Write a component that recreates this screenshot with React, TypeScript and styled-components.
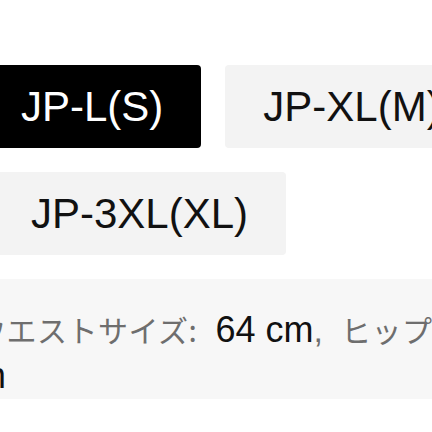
import * as React from "react";
import styled, { createGlobalStyle } from "styled-components";

const GlobalStyle = createGlobalStyle`
  html, body {
    margin: 0;
    padding: 0;
    background: #ffffff;
    overflow: hidden;
  }
  body {
    font-family: "Liberation Sans", "Noto Sans CJK JP", sans-serif;
  }
`;

const Page = styled.div`
  width: 520px;
  margin-left: -30px;
  padding-top: 65px;
`;

const SizeGrid = styled.div`
  display: flex;
  flex-wrap: wrap;
  gap: 24px;
  padding-left: 13px;
`;

const SizeOption = styled.button<{ selected?: boolean; shift?: number }>`
  height: 83px;
  padding: 0 38px;
  margin-left: ${props => props.shift || 0}px;
  border: none;
  border-radius: 4px;
  display: flex;
  align-items: center;
  justify-content: center;
  font-family: "Liberation Sans", Arial, sans-serif;
  font-size: 42px;
  background: ${props => (props.selected ? "#000000" : "#f3f3f3")};
  color: ${props => (props.selected ? "#ffffff" : "#111111")};
  white-space: nowrap;
`;

const Measurements = styled.div`
  margin-top: 24px;
  height: 120px;
  box-sizing: border-box;
  padding: 31px 0 0 6px;
  background: #f7f7f7;
  line-height: 39px;
  white-space: nowrap;
`;

const Line = styled.div`
  display: block;
`;

const Label = styled.span`
  font-family: "Noto Sans CJK JP", "Liberation Sans", sans-serif;
  font-size: 30px;
  letter-spacing: 0.5px;
  color: #6e6e6e;
`;

const Value = styled.span<{ gap?: number }>`
  margin-left: ${props => props.gap || 0}px;
  font-family: "Liberation Sans", Arial, sans-serif;
  font-size: 36px;
  color: #111111;
`;

const Comma = styled.span`
  margin-right: 18px;
  font-family: "Liberation Sans", Arial, sans-serif;
  font-size: 34px;
  color: #6e6e6e;
`;

const sizes = [
  { id: "l", text: "JP-L(S)", shift: 0 },
  { id: "xl", text: "JP-XL(M)", shift: 0 },
  { id: "3xl", text: "JP-3XL(XL)", shift: 10 }
];

const App: React.FunctionComponent = () => {
  const [selected, setSelected] = React.useState("l");
  return (
    <>
      <GlobalStyle />
      <Page>
        <SizeGrid>
          {sizes.map(size => (
            <SizeOption
              key={size.id}
              selected={selected === size.id}
              shift={size.shift}
              onClick={() => setSelected(size.id)}
            >
              {size.text}
            </SizeOption>
          ))}
        </SizeGrid>
        <Measurements>
          <Line>
            <Label>ウエストサイズ:</Label>
            <Value gap={18}>64 cm</Value>
            <Comma>,</Comma>
            <Label>ヒップサイズ:</Label>
            <Value gap={18}>88 c</Value>
          </Line>
          <Line>
            <Value>m</Value>
          </Line>
        </Measurements>
      </Page>
    </>
  );
};

export default App;
